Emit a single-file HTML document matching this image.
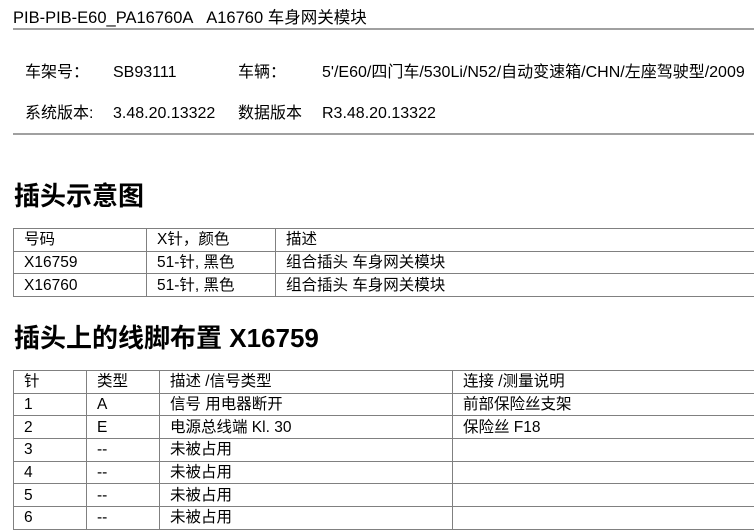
<!DOCTYPE html>
<html><head><meta charset="utf-8"><style>
body{margin:0;width:754px;height:523px;overflow:hidden;background:#fff;font-family:"Liberation Sans","Noto Sans CJK SC",sans-serif;color:#000;position:relative}
.a{position:absolute;white-space:nowrap;font-size:16px;line-height:18px}
.hr{position:absolute;left:13px;right:0;height:2px;background:#a0a0a0}
h2{position:absolute;margin:0;font-size:26px;font-weight:bold;left:14px;white-space:nowrap;line-height:30px}
table{position:absolute;left:13px;border-collapse:collapse;font-size:15.5px;table-layout:fixed}
td{border:1px solid #808080;height:20.7px;padding:1px 0 0 10px;white-space:nowrap;overflow:hidden;line-height:20px}
</style></head><body>
<div class="a" style="left:13px;top:9px;font-size:16.5px">PIB-PIB-E60_PA16760A&nbsp;&nbsp; A16760 车身网关模块</div>
<div class="hr" style="top:28px"></div>
<div class="a" style="left:25px;top:64px">车架号：</div>
<div class="a" style="left:113px;top:64px">SB93111</div>
<div class="a" style="left:238px;top:64px">车辆：</div>
<div class="a" style="left:322px;top:64px">5'/E60/四门车/530Li/N52/自动变速箱/CHN/左座驾驶型/2009</div>
<div class="a" style="left:25px;top:105px">系统版本:</div>
<div class="a" style="left:113px;top:105px">3.48.20.13322</div>
<div class="a" style="left:238px;top:105px">数据版本</div>
<div class="a" style="left:322px;top:105px">R3.48.20.13322</div>
<div class="hr" style="top:133px"></div>
<h2 style="top:181px">插头示意图</h2>
<table style="top:228px;width:760px">
<colgroup><col style="width:133px"><col style="width:129px"><col style="width:498px"></colgroup>
<tr><td>号码</td><td>X针，颜色</td><td>描述</td></tr>
<tr><td>X16759</td><td>51-针, 黑色</td><td>组合插头 车身网关模块</td></tr>
<tr><td>X16760</td><td>51-针, 黑色</td><td>组合插头 车身网关模块</td></tr>
</table>
<h2 style="top:323px">插头上的线脚布置 X16759</h2>
<table style="top:370px;width:760px">
<colgroup><col style="width:73px"><col style="width:73px"><col style="width:293px"><col style="width:321px"></colgroup>
<tr><td>针</td><td>类型</td><td>描述 /信号类型</td><td>连接 /测量说明</td></tr>
<tr><td>1</td><td>A</td><td>信号 用电器断开</td><td>前部保险丝支架</td></tr>
<tr><td>2</td><td>E</td><td>电源总线端 Kl. 30</td><td>保险丝 F18</td></tr>
<tr><td>3</td><td>--</td><td>未被占用</td><td></td></tr>
<tr><td>4</td><td>--</td><td>未被占用</td><td></td></tr>
<tr><td>5</td><td>--</td><td>未被占用</td><td></td></tr>
<tr><td>6</td><td>--</td><td>未被占用</td><td></td></tr>
</table>
</body></html>
